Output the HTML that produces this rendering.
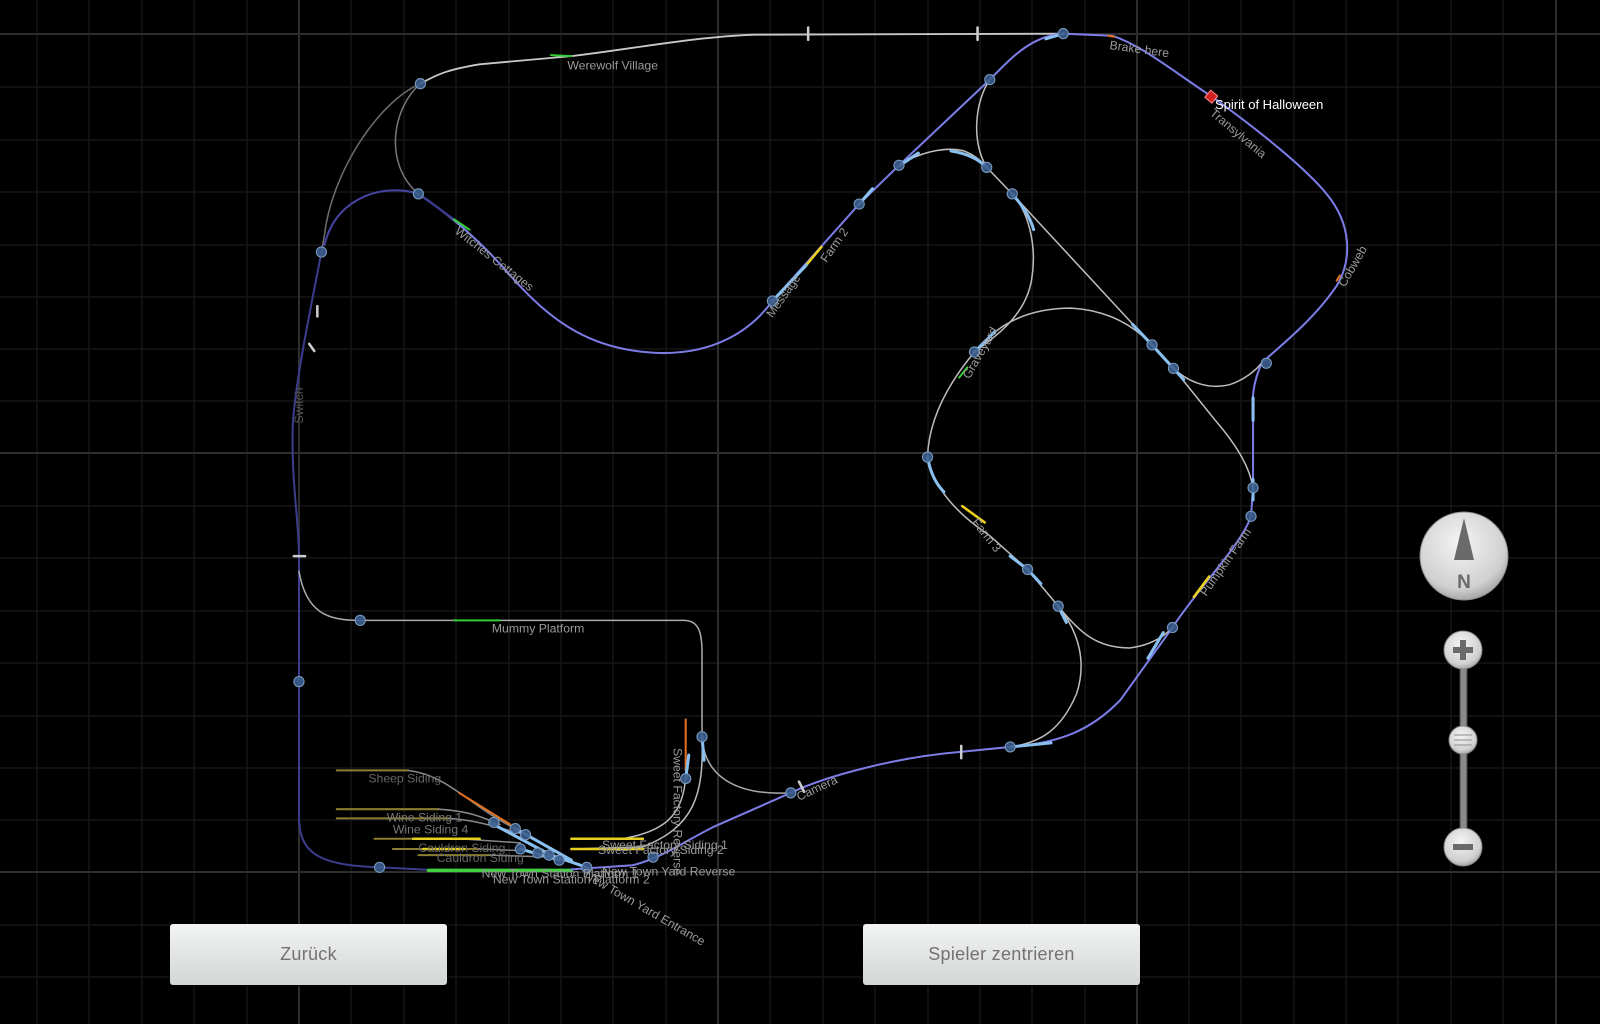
<!DOCTYPE html>
<html><head><meta charset="utf-8"><style>
html,body{margin:0;padding:0;background:#000;width:1600px;height:1024px;overflow:hidden;font-family:"Liberation Sans",sans-serif}
svg{position:absolute;left:0;top:0}
.btn{position:absolute;top:924px;width:277px;height:61px;border-radius:3px;background:linear-gradient(#f3f4f4,#d3d6d6);box-shadow:0 1px 2px #000;color:#727272;font-size:18px;line-height:61px;text-align:center;letter-spacing:.3px}
</style></head><body>
<svg width="1600" height="1024" viewBox="0 0 1600 1024">
<defs>
<radialGradient id="cg" cx="45%" cy="35%" r="65%"><stop offset="0" stop-color="#f4f4f4"/><stop offset=".8" stop-color="#d0d0d0"/><stop offset="1" stop-color="#a8a8a8"/></radialGradient>
</defs>
<g id="grid" stroke="#151515" stroke-width="1.5">
<path d="M37 0V1024M89 0V1024M142 0V1024M194 0V1024M247 0V1024M351 0V1024M404 0V1024M456 0V1024M509 0V1024M561 0V1024M613 0V1024M666 0V1024M770 0V1024M823 0V1024M875 0V1024M928 0V1024M980 0V1024M1032 0V1024M1085 0V1024M1189 0V1024M1241 0V1024M1294 0V1024M1346 0V1024M1398 0V1024M1451 0V1024M1503 0V1024"/>
<path d="M0 87H1600M0 140H1600M0 192H1600M0 245H1600M0 297H1600M0 349H1600M0 401H1600M0 506H1600M0 558H1600M0 611H1600M0 663H1600M0 716H1600M0 768H1600M0 820H1600M0 925H1600M0 977H1600"/>
</g>
<g stroke="#2e2e2e" stroke-width="2">
<path d="M299 0V1024M718 0V1024M1137 0V1024M1556 0V1024M0 34H1600M0 453H1600M0 872H1600"/>
</g>
<g transform="scale(1.0204)" fill="none" stroke-linecap="round">
<path d="M412 82C370 100 325 170 318 230L315 247" stroke="#6e6e6e" stroke-width="1.5"/>
<path d="M412 82C385 105 375 160 410 190" stroke="#777" stroke-width="1.5"/>
<path d="M410 190C380 180 330 190 318 240" stroke="#4545a0" stroke-width="2"/>
<path d="M315 247C305 300 290 370 287 415C285 470 293 510 293 545L293 800C293 835 310 848 372 850L430 853" stroke="#3c3c8c" stroke-width="2"/>
<path d="M412 82C430 72 440 68 470 63L560 55C620 48 680 36 740 34L1042 33" stroke="#c8c8c8" stroke-width="1.8"/>
<path d="M540 54L560 55" stroke="#3c3" stroke-width="2"/>
<path d="M293 560C300 600 320 608 353 608L670 608C685 608 688 620 688 640L688 722C690 760 720 780 775 777" stroke="#aaa" stroke-width="1.5"/>
<path d="M445 608L490 608" stroke="#3c3" stroke-width="2"/>
<path d="M688 722C690 780 680 810 630 830L560 832" stroke="#bbb" stroke-width="1.5"/>
<path d="M672 705L672 760C670 800 650 815 610 822L560 822" stroke="#bbb" stroke-width="1.5"/>
<path d="M672 705L672 755" stroke="#e07020" stroke-width="2"/>
<g stroke="#8a7e30" stroke-width="2"><path d="M330 755H400M330 793H430M330 802H440M367 822H450M385 832H470M410 838H480"/></g>
<g stroke="#888" stroke-width="1.5"><path d="M400 755C440 760 460 790 505 812M430 793C460 795 470 800 490 808M440 802C470 804 490 812 515 818M450 822L510 826M470 832L520 834M480 838L540 840"/></g>
<path d="M450 777L500 808" stroke="#e07020" stroke-width="2"/>
<path d="M405 822H470M415 832H455" stroke="#e8d020" stroke-width="2.5"/>
<path d="M560 822H630M560 832H630" stroke="#e8d020" stroke-width="2.5"/>
<path d="M420 853H560" stroke="#40d040" stroke-width="3.5"/>
<path d="M480 806L540 838L575 850M505 812L560 843M510 832L548 843" stroke="#8ac0f0" stroke-width="3"/>
<path d="M410 190C440 210 470 235 500 270C540 315 580 345 650 346C700 346 735 325 757 295L842 200L881 162L970 78C990 58 1010 35 1042 33L1090 35C1120 45 1150 70 1188 95C1230 125 1280 165 1300 190C1325 220 1325 255 1310 280C1290 310 1260 335 1237 355C1230 370 1226 385 1228 412L1228 478L1226 506C1216 535 1175 575 1149 615L1098 686C1070 715 1040 728 990 732L940 737C880 742 810 760 775 777L700 810C670 825 650 840 620 848L560 852" stroke="#7c7ce6" stroke-width="2"/>
<path d="M410 190L445 215" stroke="#3a3a90" stroke-width="2"/>
<path d="M445 215L460 225" stroke="#3c3" stroke-width="2"/>
<path d="M790 260L805 242" stroke="#e8d020" stroke-width="2.5"/>
<path d="M1170 585L1185 565" stroke="#e8d020" stroke-width="2.5"/>
<path d="M1086 35L1092 36M1310 275L1313 270" stroke="#e07020" stroke-width="2"/>
<g stroke="#bdbdbd" stroke-width="1.5">
<path d="M970 78C955 100 952 140 967 164L992 190"/>
<path d="M881 162C900 150 925 143 945 148C955 152 962 158 967 164"/>
<path d="M992 190C1010 210 1016 245 1011 274C1005 310 975 330 955 345"/>
<path d="M992 190L1129 338L1150 361C1165 375 1185 382 1205 377C1220 372 1232 362 1237 355"/>
<path d="M1150 361L1191 412C1215 440 1225 460 1228 478"/>
<path d="M955 345C930 375 910 410 909 448C915 480 940 505 970 525L1007 558L1037 594C1058 620 1075 635 1107 635C1125 633 1140 625 1149 615"/>
<path d="M955 345C980 315 1010 302 1050 302C1085 304 1110 318 1129 338"/>
<path d="M1037 594C1058 620 1065 650 1055 680C1040 715 1020 728 990 732"/>
</g>
<path d="M940 370L948 360" stroke="#3c3" stroke-width="2"/>
<path d="M943 496L965 512" stroke="#e8d020" stroke-width="2.5"/>
<g stroke="#8ac0f0" stroke-width="3"><path d="M932 148C945 150 958 155 967 164M992 190C1005 205 1010 215 1013 225M955 345L975 325M909 448C912 465 918 475 925 482M990 545L1007 558L1020 572M1037 594L1045 610M1110 318L1129 338L1160 372M1228 390L1228 412M1228 470L1228 490M1140 620L1125 645M757 295L790 260M842 200L855 185M882 162L900 150M1042 33L1025 38M990 732L1030 728M672 763L675 740M688 722L690 745"/></g>
<g stroke="#ccc" stroke-width="2.5"><path d="M792 27V39M958 27V39M942 731V743M783 766L788 776M288 545H299M311 300V310M303 337L308 344"/></g>
<g fill="#3c5e8e" stroke="#7a9cc0" stroke-width="1" fill-opacity=".9">
<circle cx="412" cy="82" r="5"/><circle cx="410" cy="190" r="5"/><circle cx="315" cy="247" r="5"/><circle cx="353" cy="608" r="5"/><circle cx="293" cy="668" r="5"/><circle cx="372" cy="850" r="5"/><circle cx="688" cy="722" r="5"/><circle cx="672" cy="763" r="5"/><circle cx="775" cy="777" r="5"/><circle cx="640" cy="840" r="5"/><circle cx="575" cy="850" r="5"/><circle cx="484" cy="806" r="5"/><circle cx="505" cy="812" r="5"/><circle cx="515" cy="818" r="5"/><circle cx="510" cy="832" r="5"/><circle cx="527" cy="836" r="5"/><circle cx="538" cy="838" r="5"/><circle cx="548" cy="843" r="5"/><circle cx="990" cy="732" r="5"/><circle cx="757" cy="295" r="5"/><circle cx="842" cy="200" r="5"/><circle cx="881" cy="162" r="5"/><circle cx="970" cy="78" r="5"/><circle cx="1042" cy="33" r="5"/><circle cx="967" cy="164" r="5"/><circle cx="992" cy="190" r="5"/><circle cx="955" cy="345" r="5"/><circle cx="909" cy="448" r="5"/><circle cx="1007" cy="558" r="5"/><circle cx="1037" cy="594" r="5"/><circle cx="1149" cy="615" r="5"/><circle cx="1129" cy="338" r="5"/><circle cx="1150" cy="361" r="5"/><circle cx="1241" cy="356" r="5"/><circle cx="1228" cy="478" r="5"/><circle cx="1226" cy="506" r="5"/>
</g>
<rect x="1183" y="90" width="9" height="9" fill="#d02020" stroke="#f88" stroke-width="1" transform="rotate(40 1187 94)"/>
<g fill="#9a9a9a" stroke="none" font-family="Liberation Sans, sans-serif" font-size="12">
<text x="556" y="68">Werewolf Village</text>
<text x="1087" y="48" transform="rotate(8 1087 48)">Brake here</text>
<text x="1185" y="112" transform="rotate(40 1185 112)">Transylvania</text>
<text x="1318" y="282" transform="rotate(-60 1318 282)">Cobweb</text>
<text x="810" y="258" transform="rotate(-55 810 258)">Farm 2</text>
<text x="757" y="312" transform="rotate(-55 757 312)">Message</text>
<text x="445" y="228" transform="rotate(38 445 228)">Witches Cottages</text>
<text x="297" y="415" fill="#555" transform="rotate(-90 297 415)">Switch</text>
<text x="950" y="372" transform="rotate(-60 950 372)">Graveyard</text>
<text x="952" y="512" transform="rotate(52 952 512)">Farm 3</text>
<text x="1182" y="585" transform="rotate(-55 1182 585)">Pumpkin Farm</text>
<text x="482" y="620">Mummy Platform</text>
<text x="783" y="785" transform="rotate(-25 783 785)">Camera</text>
<text x="660" y="733" transform="rotate(90 660 733)">Sweet Factory Reverse</text>
<text x="361" y="767" fill="#666">Sheep Siding</text>
<text x="379" y="805" fill="#777">Wine Siding 1</text>
<text x="385" y="817" fill="#777">Wine Siding 4</text>
<text x="410" y="835" fill="#666">Cauldron Siding</text>
<text x="428" y="845" fill="#666">Cauldron Siding</text>
<text x="590" y="832">Sweet Factory Siding 1</text>
<text x="586" y="837">Sweet Factory Siding 2</text>
<text x="590" y="858">New Town Yard Reverse</text>
<text x="472" y="860">New Town Station Platform 1</text>
<text x="483" y="866">New Town Station Platform 2</text>
<text x="572" y="860" transform="rotate(30 572 860)">New Town Yard Entrance</text>
</g>
</g>
<text x="1215" y="109" fill="#fff" font-size="13" font-family="Liberation Sans, sans-serif">Spirit of Halloween</text>
<circle cx="1464" cy="556" r="44" fill="url(#cg)" stroke="#8a8a8a" stroke-width="1"/>
<path d="M1464 518L1454 560H1474Z" fill="#6a6a6a"/>
<text x="1464" y="588" text-anchor="middle" fill="#6a6a6a" font-size="19" font-weight="bold" font-family="Liberation Sans, sans-serif">N</text>
<rect x="1460" y="660" width="7" height="180" fill="#8a8a8a" stroke="#444" stroke-width="1"/>
<circle cx="1463" cy="650" r="19" fill="url(#cg)" stroke="#888"/>
<path d="M1460 640h6v7h7v6h-7v7h-6v-7h-7v-6h7z" fill="#6a6a6a"/>
<circle cx="1463" cy="740" r="14" fill="url(#cg)" stroke="#888"/>
<path d="M1454 735h18M1454 740h18M1454 745h18" stroke="#aaa" stroke-width="1.5"/>
<circle cx="1463" cy="847" r="19" fill="url(#cg)" stroke="#888"/>
<rect x="1453" y="844" width="20" height="6" fill="#6a6a6a"/>
</svg>
<div class="btn" style="left:170px">Zurück</div>
<div class="btn" style="left:863px">Spieler zentrieren</div>
</body></html>
